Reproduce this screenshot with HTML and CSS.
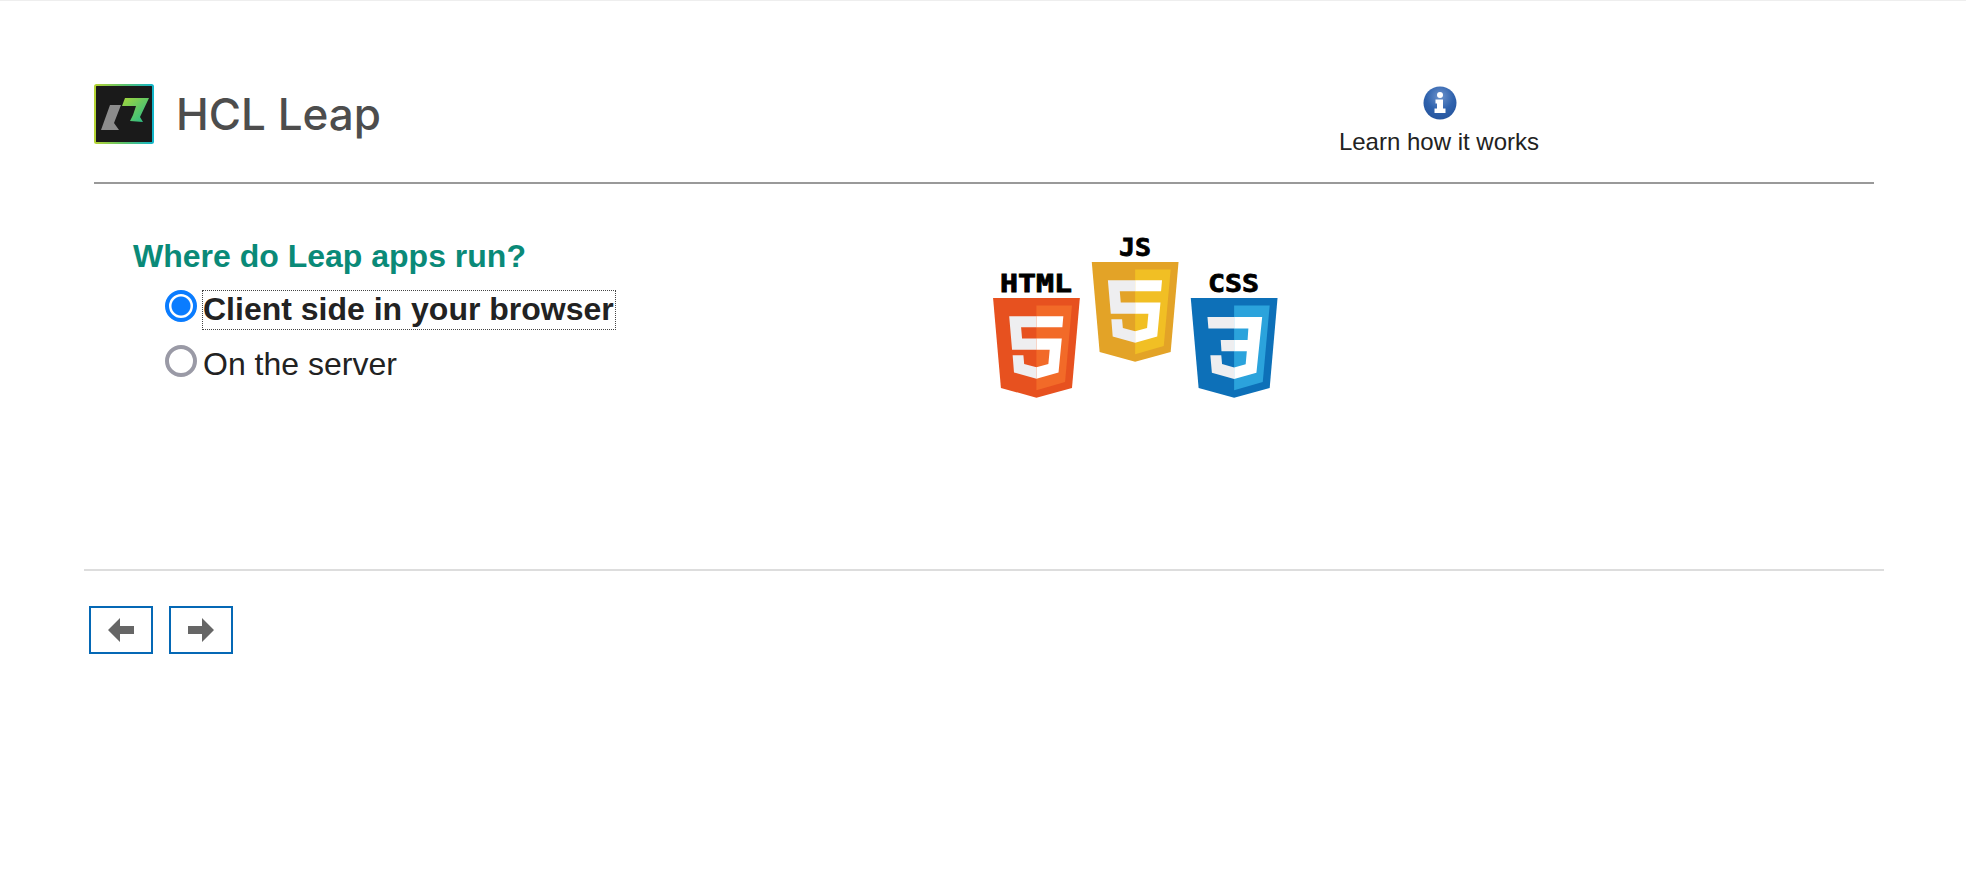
FILE: index.html
```html
<!DOCTYPE html>
<html lang="en">
<head>
<meta charset="UTF-8">
<meta name="viewport" content="width=device-width, initial-scale=1.0">
<title>HCL Leap</title>
<link rel="stylesheet" href="styles.css">
</head>
<body>
    <div class="header">
        <svg class="logo" viewBox="0 0 60 60">
            <defs>
                <linearGradient id="logoEdge" x1="0" y1="0" x2="1" y2="0">
                    <stop offset="0" stop-color="#b5d334"/>
                    <stop offset="0.5" stop-color="#5cc26a"/>
                    <stop offset="1" stop-color="#12b5c9"/>
                </linearGradient>
                <linearGradient id="logoMark" x1="0" y1="0" x2="1" y2="1">
                    <stop offset="0" stop-color="#a4d63c"/>
                    <stop offset="1" stop-color="#1fb98c"/>
                </linearGradient>
            </defs>
            <rect x="1" y="1" width="58" height="58" rx="1.5" fill="#1a1a1a" stroke="url(#logoEdge)" stroke-width="2"/>
            <path d="M16 21H27L20 39l5 7H7z" fill="#8c8c8c"/>
            <path d="M31 14H55L46 33l3 5-13-1 3-6 3-9H28z" fill="url(#logoMark)"/>
        </svg>
        <div class="app-name">HCL Leap</div>
        <div class="learn">
            <svg class="info-icon" viewBox="0 0 34 34">
                <defs>
                    <radialGradient id="infoBall" cx="0.5" cy="0.3" r="0.75">
                        <stop offset="0" stop-color="#6d93cc"/>
                        <stop offset="0.55" stop-color="#2f62ad"/>
                        <stop offset="1" stop-color="#24539b"/>
                    </radialGradient>
                </defs>
                <circle cx="17" cy="17" r="16.5" fill="url(#infoBall)"/>
                <circle cx="17" cy="9" r="3" fill="#fff"/>
                <path d="M12.500 13.500h7.500v9h2.500v4.500h-11v-4.500h2.500v-5h-1.500z" fill="#fff"/>
            </svg>
            <div>Learn how it works</div>
        </div>
    </div>

    <div class="content">
        <div class="question">
            <h2>Where do Leap apps run?</h2>
            <label class="option selected">
                <input type="radio" name="where" checked>
                <span>Client side in your browser</span>
            </label>
            <label class="option">
                <input type="radio" name="where">
                <span>On the server</span>
            </label>
        </div>
        <svg class="tech-logos" viewBox="0 0 288 164">
            <!-- html -->
            <text class="tech-label" x="44" y="56" textLength="72" lengthAdjust="spacingAndGlyphs" text-anchor="middle">HTML</text>
            <g transform="translate(-4.700 62) scale(0.192 0.195)">
                <path fill="#e7511f" d="M71 461 30 0h452l-41 461-185 51z"/>
                <path fill="#f26a28" d="M405 431 441 38H256v435z"/>
                <path fill="#eeeef0" d="M256 208h-75l-5-58h80V94H114l15 171h127zm0 147-64-17-4-45h-56l7 89 117 32z"/>
                <path fill="#fff" d="M256 208v57h69l-7 73-62 17v59l115-32 17-174zm0-114v56h135l5-56z"/>
            </g>
            <!-- js -->
            <text class="tech-label" x="143" y="20" textLength="32" lengthAdjust="spacingAndGlyphs" text-anchor="middle">JS</text>
            <g transform="translate(94 26) scale(0.192 0.195)">
                <path fill="#e3a327" d="M71 461 30 0h452l-41 461-185 51z"/>
                <path fill="#f1bf24" d="M405 431 441 38H256v435z"/>
                <path fill="#eeeef0" d="M256 208h-75l-5-58h80V94H114l15 171h127zm0 147-64-17-4-45h-56l7 89 117 32z"/>
                <path fill="#fff" d="M256 208v57h69l-7 73-62 17v59l115-32 17-174zm0-114v56h135l5-56z"/>
            </g>
            <!-- css -->
            <text class="tech-label" x="241.500" y="56" textLength="51" lengthAdjust="spacingAndGlyphs" text-anchor="middle">CSS</text>
            <g transform="translate(193 62) scale(0.192 0.195)">
                <path fill="#0d70b8" d="M71 461 30 0h452l-41 461-185 51z"/>
                <path fill="#2ba3dc" d="M405 431 441 38H256v435z"/>
                <path fill="#eeeef0" d="M117 98H256v58H122zM186 215H256v58H190zM256 356l-63-17-4-45h-57l8 89 116 32z"/>
                <path fill="#fff" d="M256 98H402L372 383 256 415V356l60-16 6-67H256V215h70l4-59H256z"/>
            </g>
        </svg>
    </div>

    <div class="nav-bar">
        <button class="nav-btn" type="button" aria-label="Back">
            <svg viewBox="0 0 26 26"><path d="M0 13 12 1v8h14v8H12v8z"/></svg>
        </button>
        <button class="nav-btn" type="button" aria-label="Next">
            <svg viewBox="0 0 26 26"><path d="M26 13 14 1v8H0v8h14v8z"/></svg>
        </button>
    </div>
</body>
</html>
```

FILE: styles.css
```css
body {
    margin: 0;
    padding: 0;
    font-family: "Liberation Sans", Arial, sans-serif;
    background-color: #ffffff;
    color: #222;
    border-top: 1px solid #eeeeee;
}
.header {
    display: flex;
    align-items: flex-start;
    height: 183px;
    margin: 0 92px 0 94px;
    padding-top: 83px;
    box-sizing: border-box;
    border-bottom: 2px solid #999;
}
.logo {
    width: 60px;
    height: 60px;
}
.app-name {
    margin-left: 22px;
    font-family: Inter, sans-serif;
    font-size: 44px;
    font-weight: 500;
    line-height: 60px;
    color: #4d4d4d;
}
.learn {
    display: flex;
    flex-direction: column;
    align-items: center;
    gap: 8px;
    margin-left: auto;
    margin-right: 335px;
    margin-top: 2px;
    font-size: 24px;
}
.info-icon {
    width: 34px;
    height: 34px;
    margin-left: 2px;
}
.content {
    display: grid;
    grid-template-columns: 859px auto;
    height: 385px;
    padding-left: 133px;
    box-sizing: border-box;
}
.question h2 {
    margin: 54px 0 16px;
    font-size: 32px;
    line-height: 36px;
    color: #0a8a78;
}
.option {
    display: flex;
    align-items: flex-start;
    gap: 5px;
    margin-left: 32px;
    margin-bottom: 15px;
    font-size: 32px;
    line-height: 36px;
}
.option span {
    padding: 0 1px 2px 0;
    border: 1px solid transparent;
}
.option.selected span {
    font-weight: bold;
    border: 1px dotted #444;
}
.option input {
    appearance: none;
    width: 32px;
    height: 32px;
    margin: 0;
    border: 4px solid #9a9aa6;
    border-radius: 50%;
    background-color: #fff;
}
.option input:checked {
    border-color: #0a7cff;
    background: radial-gradient(circle, #0a7cff 0 9px, #fff 10px);
}
.tech-logos {
    width: 288px;
    height: 164px;
    margin-top: 52px;
    overflow: visible;
}
.tech-label {
    font-family: "DejaVu Sans Mono", monospace;
    font-weight: bold;
    font-size: 24px;
    fill: #000;
    stroke: #000;
    stroke-width: 0.8;
}
.nav-bar {
    display: flex;
    gap: 16px;
    margin: 0 82px 0 84px;
    padding: 35px 0 0 5px;
    border-top: 2px solid #ddd;
}
.nav-btn {
    display: flex;
    align-items: center;
    justify-content: center;
    width: 64px;
    height: 48px;
    padding: 0;
    background-color: #fff;
    border: 2px solid #0568b5;
}
.nav-btn svg {
    width: 26px;
    height: 26px;
    fill: #666;
}
```
